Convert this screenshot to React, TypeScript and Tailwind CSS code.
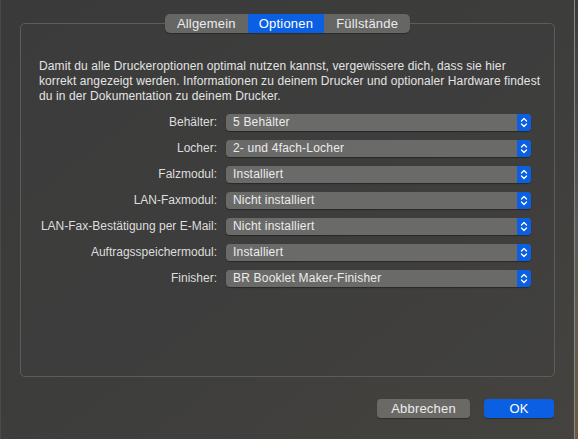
import React from 'react';

const rows: { label: string; value: string }[] = [
  { label: 'Behälter:', value: '5 Behälter' },
  { label: 'Locher:', value: '2- und 4fach-Locher' },
  { label: 'Falzmodul:', value: 'Installiert' },
  { label: 'LAN-Faxmodul:', value: 'Nicht installiert' },
  { label: 'LAN-Fax-Bestätigung per E-Mail:', value: 'Nicht installiert' },
  { label: 'Auftragsspeichermodul:', value: 'Installiert' },
  { label: 'Finisher:', value: 'BR Booklet Maker-Finisher' },
];

const tabs = ['Allgemein', 'Optionen', 'Füllstände'];

const Stepper: React.FC = () => (
  <svg width="8" height="11" viewBox="0 0 8 11" fill="none" stroke="white" strokeWidth="1.3" strokeLinecap="round" strokeLinejoin="round">
    <path d="M1.5 4 L4 1.5 L6.5 4" />
    <path d="M1.5 7 L4 9.5 L6.5 7" />
  </svg>
);

const PopUp: React.FC<{ value: string }> = ({ value }) => (
  <div className="flex h-[17px] w-[305px] items-stretch rounded-[4px] bg-[#6a6a69] shadow-[0_1px_1px_rgba(0,0,0,0.35)]">
    <span className="flex-1 pl-[7px] text-[12px] leading-[17px] tracking-[0.2px] text-[#ececec]">{value}</span>
    <span className="flex w-[14px] items-center justify-center rounded-r-[4px] bg-[#0b5fe2]">
      <Stepper />
    </span>
  </div>
);

const App: React.FC = () => {
  return (
    <div
      className="flex h-[439px] w-[578px] overflow-hidden bg-[#2a2a2a]"
      style={{ fontFamily: '"Liberation Sans", Arial, sans-serif' }}
    >
      <div className="flex w-[575px] flex-col border-r border-l border-r-[#8a8a88] border-l-[#4a4a48] bg-gradient-to-br from-[#3a3a3a] via-[#3d3d3c] to-[#45433f]">
        <div className="relative z-10 flex justify-center pt-[14px]">
          <div className="flex h-[19px] overflow-hidden rounded-[5px] bg-[#666665] shadow-[0_1px_1px_rgba(0,0,0,0.3)]">
            {tabs.map((t) => (
              <div
                key={t}
                className={
                  t === 'Optionen'
                    ? 'flex items-center bg-[#0b5fe2] px-[11px] text-[13px] tracking-[0.2px] text-white'
                    : 'flex items-center px-[12px] text-[13px] tracking-[0.2px] text-[#ececec]'
                }
              >
                {t}
              </div>
            ))}
          </div>
        </div>

        <div className="mx-[19px] -mt-[10px] flex h-[354px] flex-col rounded-[5px] border border-[#5c5c5a] bg-[#3f3f3e]/40 pt-[35px]">
          <div className="flex flex-col pl-[18px] text-[12px] leading-[15px] tracking-[0.1px] whitespace-nowrap text-[#e4e4e4]">
            <span>Damit du alle Druckeroptionen optimal nutzen kannst, vergewissere dich, dass sie hier</span>
            <span>korrekt angezeigt werden. Informationen zu deinem Drucker und optionaler Hardware findest</span>
            <span>du in der Dokumentation zu deinem Drucker.</span>
          </div>

          <div className="mt-[10px] flex flex-col gap-[9px]">
            {rows.map((r) => (
              <div key={r.label} className="flex h-[17px] items-center">
                <span className="w-[205px] pr-[9px] text-right text-[12px] leading-[17px] text-[#dedede]">{r.label}</span>
                <PopUp value={r.value} />
              </div>
            ))}
          </div>
        </div>

        <div className="mt-[22px] flex justify-end gap-[14px] pr-[20px]">
          <button className="h-[19px] w-[93px] rounded-[4px] bg-[#6b6966] text-[13px] tracking-[0.2px] text-[#ececec] shadow-[0_1px_1px_rgba(0,0,0,0.3)]">
            Abbrechen
          </button>
          <button className="h-[19px] w-[70px] rounded-[4px] bg-[#0b5fe2] text-[13px] text-white shadow-[0_1px_1px_rgba(0,0,0,0.3)]">
            OK
          </button>
        </div>
      </div>
      <div className="flex-1 bg-gradient-to-b from-[#3a3a3a] via-[#5a5a58] to-[#6b5a40]" />
    </div>
  );
};

export default App;
